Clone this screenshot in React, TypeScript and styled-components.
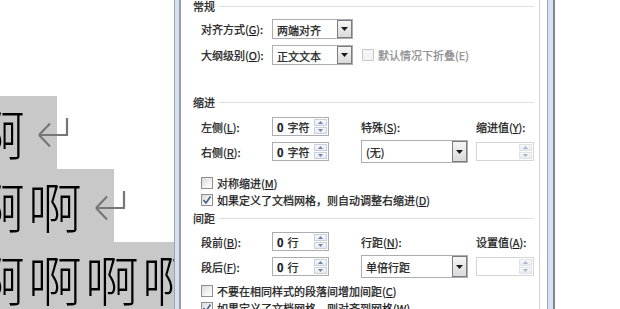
import React from 'react'
import styled, { createGlobalStyle } from 'styled-components'

const GlobalStyle = createGlobalStyle`
  html, body {
    margin: 0;
    padding: 0;
    background: #fff;
  }
  body {
    overflow: hidden;
  }
`

const Screen = styled.div`
  width: 620px;
  height: 309px;
  display: flex;
  overflow: hidden;
  background: #fff;
`

/* ---------- document side ---------- */

const DocPane = styled.div`
  width: 174px;
  flex: none;
  overflow: hidden;
  padding-top: 96px;
  box-sizing: border-box;
  font-family: 'Noto Sans CJK SC', sans-serif;
`

const DocLine = styled.div`
  display: flex;
  align-items: center;
  height: 73px;
  margin-left: -29px;
  white-space: nowrap;
`

const Selected = styled.span`
  display: block;
  height: 73px;
  line-height: 73px;
  background: #c8c8c8;
  color: #000;
  font-size: 54px;
  font-weight: 300;
  letter-spacing: 3px;
  padding-right: 29px;
`

const ReturnMark = styled.svg`
  flex: none;
  margin-left: -20px;
`

const Pilcrow = () => (
  <ReturnMark width="32" height="30" viewBox="0 0 32 30">
    <path
      d="M30 0 V17 H2 M2 17 L13 5.5 M2 17 L13 28.5"
      stroke="#777"
      strokeWidth="2.2"
      fill="none"
    />
  </ReturnMark>
)

/* ---------- dialog ---------- */

const Frame = styled.div`
  width: 381px;
  flex: none;
  box-sizing: border-box;
  display: flex;
  border-left: 1px solid #a3a3a3;
  border-right: 2px solid #858585;
  background: #d3e3f5;
  padding: 0 5px 0 4px;
`

const Client = styled.div`
  flex: 1;
  display: flex;
  background: #fff;
  border-left: 2px solid #9c9c9c;
  border-right: 1px solid #a2a2a2;
  padding-right: 7px;
`

const Panel = styled.div`
  flex: 1;
  overflow: hidden;
  border-right: 1px solid #d3d3d3;
  font-family: 'Noto Sans CJK SC', 'Noto Sans', sans-serif;
  font-size: 11px;
  color: #1a1a1a;
  -webkit-text-stroke: 0.25px currentColor;
`

const PanelBody = styled.div`
  margin-top: -2px;
  padding: 0 5px 0 12px;
`

const Heading = styled.div<{ $gap: number }>`
  display: flex;
  align-items: center;
  gap: 4px;
  height: 16px;
  margin-top: ${p => p.$gap}px;

  &::after {
    content: '';
    flex: 1;
    height: 1px;
    background: #dbe2ea;
  }
`

const Section = styled.div<{ $gap: number }>`
  padding-left: 8px;
  margin-top: ${p => p.$gap}px;
`

const GeneralGrid = styled.div`
  display: grid;
  grid-template-columns: 71px 81px 9px auto;
  grid-auto-rows: 26px;
  align-items: center;
`

const FieldGrid = styled.div`
  display: grid;
  grid-template-columns: 71px 57px 32px 107px 8px 58px;
  grid-auto-rows: 25px;
  align-items: center;
`

const Label = styled.span<{ $col?: number; $muted?: boolean }>`
  grid-column: ${p => p.$col ?? 1};
  white-space: nowrap;
  color: ${p => (p.$muted ? '#8d8d8d' : '#1a1a1a')};
`

const U = styled.span`
  text-decoration: underline;
  text-underline-offset: 1px;
`

const Combo = styled.div<{ $col: number; $h: number }>`
  grid-column: ${p => p.$col};
  height: ${p => p.$h}px;
  box-sizing: border-box;
  border: 1px solid #abadb3;
  background: #fff;
  display: flex;
  align-items: center;
  padding-left: 4px;
`

const ComboText = styled.span`
  flex: 1;
  white-space: nowrap;
  padding-top: 1px;
`

const DropButton = styled.div`
  width: 15px;
  height: 100%;
  box-sizing: border-box;
  border: 1px solid #7c7c7c;
  background: linear-gradient(#f5f5f5, #dadada);
  display: flex;
  align-items: center;
  justify-content: center;
`

const Spin = styled.div<{ $col: number; $off?: boolean }>`
  grid-column: ${p => p.$col};
  height: 19px;
  box-sizing: border-box;
  border: 1px solid ${p => (p.$off ? '#d5d5d5' : '#abadb3')};
  background: #fff;
  display: flex;
  align-items: center;
  padding: 0 1px 0 4px;
`

const SpinValue = styled.span`
  flex: 1;
  white-space: nowrap;

  b {
    font-weight: 700;
    margin-right: 4px;
  }
`

const SpinButtons = styled.div`
  width: 13px;
  height: 15px;
  display: flex;
  flex-direction: column;
  gap: 1px;
`

const SpinHalf = styled.div<{ $off?: boolean }>`
  flex: 1;
  box-sizing: border-box;
  border: 1px solid ${p => (p.$off ? '#dfe3e8' : '#c9d0da')};
  background: linear-gradient(#f6f8fb, #e6ebf1);
  display: flex;
  align-items: center;
  justify-content: center;
`

const CheckRow = styled.div<{ $gap?: number; $col?: number }>`
  display: flex;
  align-items: center;
  gap: 4px;
  height: 17px;
  grid-column: ${p => p.$col ?? 'auto'};
  margin-top: ${p => p.$gap ?? 0}px;
  white-space: nowrap;
`

const Box = styled.span<{ $off?: boolean }>`
  width: 12px;
  height: 12px;
  flex: none;
  box-sizing: border-box;
  border: 1px solid ${p => (p.$off ? '#c8c8c8' : '#8f8f8f')};
  background: ${p =>
    p.$off ? '#f4f4f4' : 'linear-gradient(135deg, #dadada, #f7f7f7 70%, #fff)'};
  display: flex;
  align-items: center;
  justify-content: center;
  -webkit-text-stroke: 0;
`

const Arrow = ({ up, color }: { up?: boolean; color: string }) => (
  <svg width="5" height="3" viewBox="0 0 5 3">
    <path d={up ? 'M0 3 L2.5 0 L5 3 Z' : 'M0 0 L5 0 L2.5 3 Z'} fill={color} />
  </svg>
)

const DropArrow = () => (
  <svg width="7" height="4" viewBox="0 0 7 4">
    <path d="M0 0 H7 L3.5 4 Z" fill="#1a1a1a" />
  </svg>
)

const Tick = () => (
  <svg width="10" height="10" viewBox="0 0 10 10">
    <path d="M1.5 5 L4 8 L8.5 1.5" stroke="#4a5f86" strokeWidth="1.6" fill="none" />
  </svg>
)

const Dropdown = ({ col, h, text }: { col: number; h: number; text: string }) => (
  <Combo $col={col} $h={h}>
    <ComboText>{text}</ComboText>
    <DropButton>
      <DropArrow />
    </DropButton>
  </Combo>
)

const Spinner = ({ col, num, unit, off }: { col: number; num?: string; unit?: string; off?: boolean }) => {
  const c = off ? '#a9b6c8' : '#6d86a8'
  return (
    <Spin $col={col} $off={off}>
      <SpinValue>
        {num && <b>{num}</b>}
        {unit}
      </SpinValue>
      <SpinButtons>
        <SpinHalf $off={off}>
          <Arrow up color={c} />
        </SpinHalf>
        <SpinHalf $off={off}>
          <Arrow color={c} />
        </SpinHalf>
      </SpinButtons>
    </Spin>
  )
}

const Check = ({ checked, off, gap, col, children }: { checked?: boolean; off?: boolean; gap?: number; col?: number; children: React.ReactNode }) => (
  <CheckRow $gap={gap} $col={col}>
    <Box $off={off}>{checked && <Tick />}</Box>
    <Label $muted={off}>{children}</Label>
  </CheckRow>
)

const App: React.FC = () => {
  return (
    <>
      <GlobalStyle />
      <Screen>
        <DocPane>
          <DocLine>
            <Selected>啊</Selected>
            <Pilcrow />
          </DocLine>
          <DocLine>
            <Selected>啊啊</Selected>
            <Pilcrow />
          </DocLine>
          <DocLine>
            <Selected>啊啊啊啊啊</Selected>
          </DocLine>
        </DocPane>

        <Frame>
          <Client>
            <Panel>
              <PanelBody>
                <Heading $gap={0}>常规</Heading>
                <Section $gap={2}>
                  <GeneralGrid>
                    <Label>
                      对齐方式(<U>G</U>):
                    </Label>
                    <Dropdown col={2} h={20} text="两端对齐" />
                    <Label>
                      大纲级别(<U>O</U>):
                    </Label>
                    <Dropdown col={2} h={20} text="正文文本" />
                    <Check col={4} off>
                      默认情况下折叠(E)
                    </Check>
                  </GeneralGrid>
                </Section>

                <Heading $gap={26}>缩进</Heading>
                <Section $gap={4}>
                  <FieldGrid>
                    <Label>
                      左侧(<U>L</U>):
                    </Label>
                    <Spinner col={2} num="0" unit="字符" />
                    <Label $col={4}>
                      特殊(<U>S</U>):
                    </Label>
                    <Label $col={6}>
                      缩进值(<U>Y</U>):
                    </Label>
                    <Label>
                      右侧(<U>R</U>):
                    </Label>
                    <Spinner col={2} num="0" unit="字符" />
                    <Dropdown col={4} h={23} text="(无)" />
                    <Spinner col={6} off />
                  </FieldGrid>
                  <Check gap={10}>
                    对称缩进(<U>M</U>)
                  </Check>
                  <Check checked>
                    如果定义了文档网格，则自动调整右缩进(<U>D</U>)
                  </Check>
                </Section>

                <Heading $gap={2}>间距</Heading>
                <Section $gap={3}>
                  <FieldGrid>
                    <Label>
                      段前(<U>B</U>):
                    </Label>
                    <Spinner col={2} num="0" unit="行" />
                    <Label $col={4}>
                      行距(<U>N</U>):
                    </Label>
                    <Label $col={6}>
                      设置值(<U>A</U>):
                    </Label>
                    <Label>
                      段后(<U>F</U>):
                    </Label>
                    <Spinner col={2} num="0" unit="行" />
                    <Dropdown col={4} h={23} text="单倍行距" />
                    <Spinner col={6} off />
                  </FieldGrid>
                  <Check gap={3}>
                    不要在相同样式的段落间增加间距(<U>C</U>)
                  </Check>
                  <Check checked>
                    如果定义了文档网格，则对齐到网格(<U>W</U>)
                  </Check>
                </Section>
              </PanelBody>
            </Panel>
          </Client>
        </Frame>
      </Screen>
    </>
  )
}

export default App
